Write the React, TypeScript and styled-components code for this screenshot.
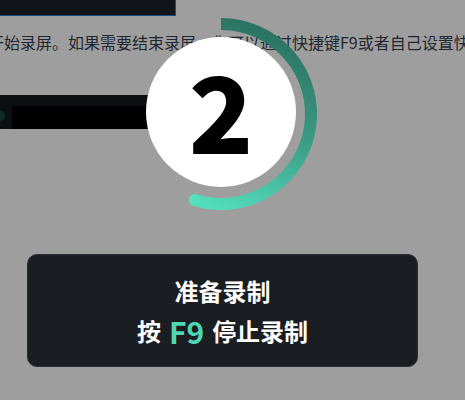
import React from "react";
import styled, { createGlobalStyle } from "styled-components";

const Global = createGlobalStyle`
  html, body {
    margin: 0;
    padding: 0;
    background: #9e9e9e;
    overflow: hidden;
    font-family: "Noto Sans CJK SC", "Noto Sans", sans-serif;
  }
`;

const Page = styled.div`
  display: flex;
  flex-direction: column;
  width: 465px;
  height: 400px;
  overflow: hidden;
`;

const InputBar = styled.div`
  width: 175px;
  height: 15px;
  background: #111419;
  border-right: 1px solid #1f4c7c;
  border-bottom: 1px solid #1f4c7c;
`;

const Paragraph = styled.p`
  margin: 14px 0 0 -12px;
  font-size: 16px;
  line-height: 24px;
  color: #1e2630;
  white-space: nowrap;
`;

const MediaBar = styled.div`
  display: flex;
  align-items: flex-end;
  width: 220px;
  height: 34px;
  margin-top: 41px;
  box-sizing: border-box;
  background: #0b0f12;
`;

const DotSlot = styled.div`
  width: 12px;
  height: 100%;
  display: flex;
  align-items: center;
  padding-top: 8px;
  box-sizing: border-box;
`;

const Dot = styled.span`
  width: 10px;
  height: 10px;
  margin-left: -5px;
  border-radius: 50%;
  background: #0f2b26;
`;

const MediaFill = styled.div`
  flex: 1;
  height: 23px;
  background: #000;
`;

const Overlay = styled.div`
  position: fixed;
  inset: 0;
  display: flex;
  flex-direction: column;
  align-items: center;
  padding: 14px 20px 0 0;
`;

const Countdown = styled.div`
  position: relative;
  width: 200px;
  height: 200px;
  margin-left: -3px;
`;

const Ring = styled.svg`
  display: block;
`;

const Digit = styled.span`
  position: absolute;
  inset: 0;
  display: flex;
  align-items: center;
  justify-content: center;
  padding-bottom: 12px;
  font-family: "Noto Sans CJK SC", "Noto Sans", sans-serif;
  font-weight: 900;
  font-size: 106px;
  line-height: 1;
  color: #000;
`;

const Dialog = styled.div`
  width: 391px;
  height: 113px;
  margin-top: 40px;
  box-sizing: border-box;
  border-radius: 10px;
  border: 1px solid #2a2e33;
  background: #1a1d21;
  display: flex;
  flex-direction: column;
  align-items: center;
  justify-content: center;
  gap: 6px;
  color: #fff;
  font-weight: 700;
`;

const Line = styled.div`
  display: flex;
  align-items: center;
  font-size: 24px;
  line-height: 34px;
  height: 34px;
`;

const Key = styled.span`
  margin: 0 8px;
  font-size: 30px;
  font-weight: 600;
  color: #4fd6b3;
  font-family: "Noto Sans CJK SC", "Noto Sans", sans-serif;
`;

export default function App() {
  const cx = 100;
  const cy = 100;
  const r = 90;
  const endAngle = (107 * Math.PI) / 180;
  const ex = cx + r * Math.cos(endAngle);
  const ey = cy + r * Math.sin(endAngle);
  return (
    <>
      <Global />
      <Page>
        <InputBar />
        <Paragraph>
          开始录屏。如果需要结束录屏，您可以通过快捷键F9或者自己设置快捷键来结束录屏。
        </Paragraph>
        <MediaBar>
          <DotSlot>
            <Dot />
          </DotSlot>
          <MediaFill />
        </MediaBar>
      </Page>
      <Overlay>
        <Countdown>
          <Ring width="200" height="200" viewBox="0 0 200 200">
            <defs>
              <linearGradient
                id="arcGrad"
                gradientUnits="userSpaceOnUse"
                x1="130"
                y1="10"
                x2="70"
                y2="190"
              >
                <stop offset="0" stopColor="#2b7362" />
                <stop offset="0.5" stopColor="#3b9c85" />
                <stop offset="1" stopColor="#54dfbd" />
              </linearGradient>
            </defs>
            <circle cx={100} cy={98} r={75} fill="#fff" />
            <path
              d={`M ${cx} ${cy - r} A ${r} ${r} 0 1 1 ${ex.toFixed(2)} ${ey.toFixed(2)}`}
              fill="none"
              stroke="url(#arcGrad)"
              strokeWidth={12}
              strokeLinecap="butt"
            />
            <circle cx={ex} cy={ey} r={6} fill="#54dfbd" />
          </Ring>
          <Digit>2</Digit>
        </Countdown>
        <Dialog>
          <Line>准备录制</Line>
          <Line>
            按<Key>F9</Key>停止录制
          </Line>
        </Dialog>
      </Overlay>
    </>
  );
}
